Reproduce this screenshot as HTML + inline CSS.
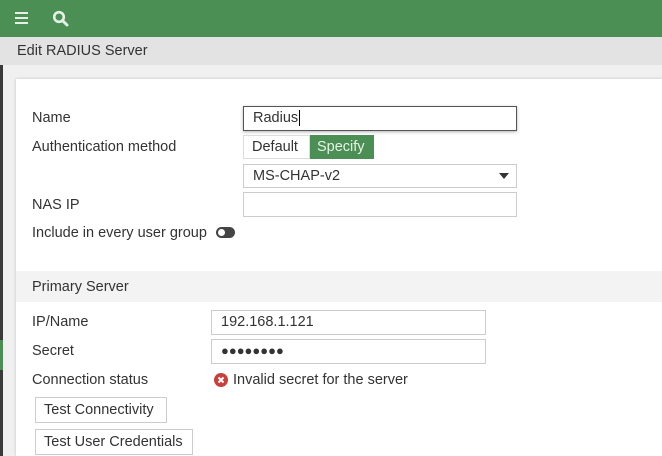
<!DOCTYPE html>
<html><head><style>
*{box-sizing:border-box;margin:0;padding:0}
body{width:662px;height:456px;overflow:hidden;background:#f0f0f0;font-family:"Liberation Sans",sans-serif;font-size:14.5px;color:#333;position:relative}
.a{position:absolute}
.lbl{position:absolute;left:32px;line-height:18px}
.inp{position:absolute;border:1px solid #ccc;background:#fff;padding-left:9px;line-height:22px;font-size:14.5px}
.btn{position:absolute;border:1px solid #ccc;background:#fff;padding-left:8px;line-height:24px;font-size:14.5px}
</style></head><body>
<div class="a" style="left:0;top:0;width:662px;height:37px;background:#4b8f55"></div>
<div class="a" style="left:15px;top:12px;width:13px;height:2px;background:#e6f0e6;box-shadow:0 5px 0 #e6f0e6,0 10px 0 #e6f0e6"></div>
<svg class="a" style="left:52px;top:10px" width="18" height="18" viewBox="0 0 18 18"><circle cx="7" cy="7" r="4.8" fill="none" stroke="#e6f0e6" stroke-width="2.6"/><line x1="10.5" y1="10.5" x2="15" y2="15" stroke="#e6f0e6" stroke-width="3" stroke-linecap="round"/></svg>
<div class="a" style="left:0;top:37px;width:662px;height:28px;background:#e3e3e3"></div>
<div class="a" style="left:17px;top:43px">Edit RADIUS Server</div>
<div class="a" style="left:0;top:65px;width:3px;height:391px;background:#3a3a3a"></div>
<div class="a" style="left:0;top:340px;width:3px;height:30px;background:#4b8f55"></div>
<div class="a" style="left:16px;top:79px;width:646px;height:377px;background:#fff;box-shadow:0 0 3px rgba(0,0,0,.2)"></div>
<div class="lbl" style="top:109px">Name</div>
<div class="inp" style="left:243px;top:106px;width:274px;height:25px;border-color:#555;box-shadow:0 1px 3px rgba(0,0,0,.3)">Radius<span style="border-left:1px solid #000;margin-left:1px"></span></div>
<div class="lbl" style="top:138px">Authentication method</div>
<div class="a" style="left:243px;top:135px;width:67px;height:24px;border:1px solid #ddd;padding-left:8px;line-height:22px">Default</div>
<div class="a" style="left:310px;top:135px;width:64px;height:24px;background:#4b8f55;color:#e8f3e8;padding-left:7px;line-height:24px">Specify</div>
<div class="inp" style="left:243px;top:164px;width:274px;height:24px">MS-CHAP-v2</div>
<svg class="a" style="left:499px;top:173px" width="10" height="6"><path d="M0 0H10L5 6Z" fill="#333"/></svg>
<div class="lbl" style="top:196px">NAS IP</div>
<div class="inp" style="left:243px;top:192px;width:274px;height:25px"></div>
<div class="lbl" style="top:224px">Include in every user group</div>
<div class="a" style="left:216px;top:227px;width:19px;height:11px;border-radius:6px;background:#444"></div>
<div class="a" style="left:218px;top:229px;width:7px;height:7px;border-radius:50%;background:#fff"></div>
<div class="a" style="left:16px;top:271px;width:646px;height:31px;background:#f3f3f3"></div>
<div class="lbl" style="top:278px">Primary Server</div>
<div class="lbl" style="top:313px">IP/Name</div>
<div class="inp" style="left:211px;top:310px;width:275px;height:25px">192.168.1.121</div>
<div class="lbl" style="top:342px">Secret</div>
<div class="inp" style="left:211px;top:339px;width:275px;height:25px;font-size:13px">●●●●●●●●</div>
<div class="lbl" style="top:371px">Connection status</div>
<svg class="a" style="left:214px;top:373px" width="14" height="14"><circle cx="7" cy="7" r="7" fill="#c9403a"/><path d="M4.5 4.5L9.5 9.5M9.5 4.5L4.5 9.5" stroke="#fff" stroke-width="2"/></svg>
<div class="a" style="left:233px;top:371px;line-height:18px">Invalid secret for the server</div>
<div class="btn" style="left:35px;top:397px;width:132px;height:26px">Test Connectivity</div>
<div class="btn" style="left:35px;top:429px;width:158px;height:26px">Test User Credentials</div>
</body></html>
